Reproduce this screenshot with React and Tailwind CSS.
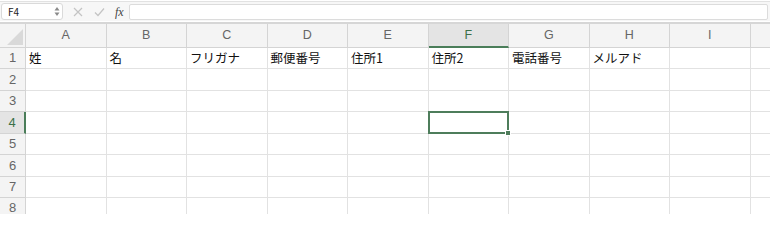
import React from "react";

const cols = ["A", "B", "C", "D", "E", "F", "G", "H", "I", "J"];
const header = ["姓", "名", "フリガナ", "郵便番号", "住所1", "住所2", "電話番号", "メルアド", "", ""];
const rows = [1, 2, 3, 4, 5, 6, 7, 8];

function Toolbar() {
  return (
    <div className="h-[22px] pt-[1px] bg-white">
      <div className="h-[20px] border-t border-[#e2e2e2] bg-[#f7f7f7] flex items-center gap-0 pr-[2px]">
        <div className="h-[17px] w-[62px] ml-[1px] bg-white border border-[#dadada] rounded-[3px] flex items-center justify-between pl-[6px] pr-[2px]">
          <span className="text-[10px] text-[#222]">F4</span>
          <svg width="6" height="11" viewBox="0 0 6 11">
            <path d="M3 1 L5.5 4.5 L0.5 4.5 Z" fill="#8a8a8a" />
            <path d="M3 10 L5.5 6.5 L0.5 6.5 Z" fill="#8a8a8a" />
          </svg>
        </div>
        <svg className="ml-[10px]" width="10" height="10" viewBox="0 0 10 10">
          <path d="M1 1 L9 9 M9 1 L1 9" stroke="#c4c4c4" strokeWidth="1.2" />
        </svg>
        <svg className="ml-[11px]" width="11" height="10" viewBox="0 0 11 10">
          <path d="M1 5.5 L4 8.5 L10 1.5" stroke="#c4c4c4" strokeWidth="1.2" fill="none" />
        </svg>
        <span className="ml-[10px] text-[12px] italic text-[#444] font-['Liberation_Serif',serif] leading-none">
          fx
        </span>
        <div className="ml-[5px] flex-1 h-[16px] bg-white border border-[#dcdcdc] rounded-[2px]" />
      </div>
    </div>
  );
}

export default function App() {
  return (
    <div className="w-[770px] h-[214px] overflow-hidden bg-white font-['Noto_Sans_CJK_JP','Noto_Sans',sans-serif]">
      <Toolbar />
      <div className="h-[2px] bg-[#d6d6d6]" />
      <div className="grid grid-cols-[26px_repeat(10,80.5px)] grid-rows-[24px_repeat(8,21.43px)]">
        <div className="relative bg-[#f4f4f4] border-r border-b border-[#d4d4d4] overflow-hidden">
          <svg className="absolute right-[2px] bottom-[2px]" width="16" height="16" viewBox="0 0 16 16">
            <path d="M16 0 L16 16 L0 16 Z" fill="#d9d9d9" />
          </svg>
        </div>
        {cols.map((c) => (
          <div
            key={c}
            className={
              c === "F"
                ? "bg-[#e4e4e4] border-r border-[#d4d4d4] border-b-2 border-b-[#4a7d59] flex items-center justify-center text-[12.5px] text-[#3b7049] font-['Liberation_Sans',sans-serif]"
                : "bg-[#f4f4f4] border-r border-b border-[#d4d4d4] flex items-center justify-center text-[12.5px] text-[#666] font-['Liberation_Sans',sans-serif]"
            }
          >
            {c === "J" ? "" : c}
          </div>
        ))}
        {rows.map((r) => (
          <React.Fragment key={r}>
            <div
              className={
                r === 4
                  ? "bg-[#e4e4e4] border-r-2 border-r-[#4a7d59] border-b border-[#d4d4d4] flex items-center justify-center text-[13px] text-[#3b7049] font-['Liberation_Sans',sans-serif]"
                  : "bg-[#f4f4f4] border-r border-b border-[#d4d4d4] flex items-center justify-center text-[13px] text-[#666] font-['Liberation_Sans',sans-serif]"
              }
            >
              {r}
            </div>
            {cols.map((c, i) => (
              <div
                key={c}
                className="relative border-r border-b border-[#e2e2e2] flex items-center pl-[3px] text-[12.5px] text-[#111] whitespace-nowrap"
              >
                {r === 1 ? header[i] : ""}
                {r === 4 && c === "F" && (
                  <div className="absolute z-10 left-[-1px] top-[-1px] right-[-1px] bottom-[-1px] border-2 border-[#4e7d5b]">
                    <div className="absolute right-[-4px] bottom-[-4px] w-[6px] h-[6px] bg-[#4e7d5b] border border-white" />
                  </div>
                )}
              </div>
            ))}
          </React.Fragment>
        ))}
      </div>
    </div>
  );
}
